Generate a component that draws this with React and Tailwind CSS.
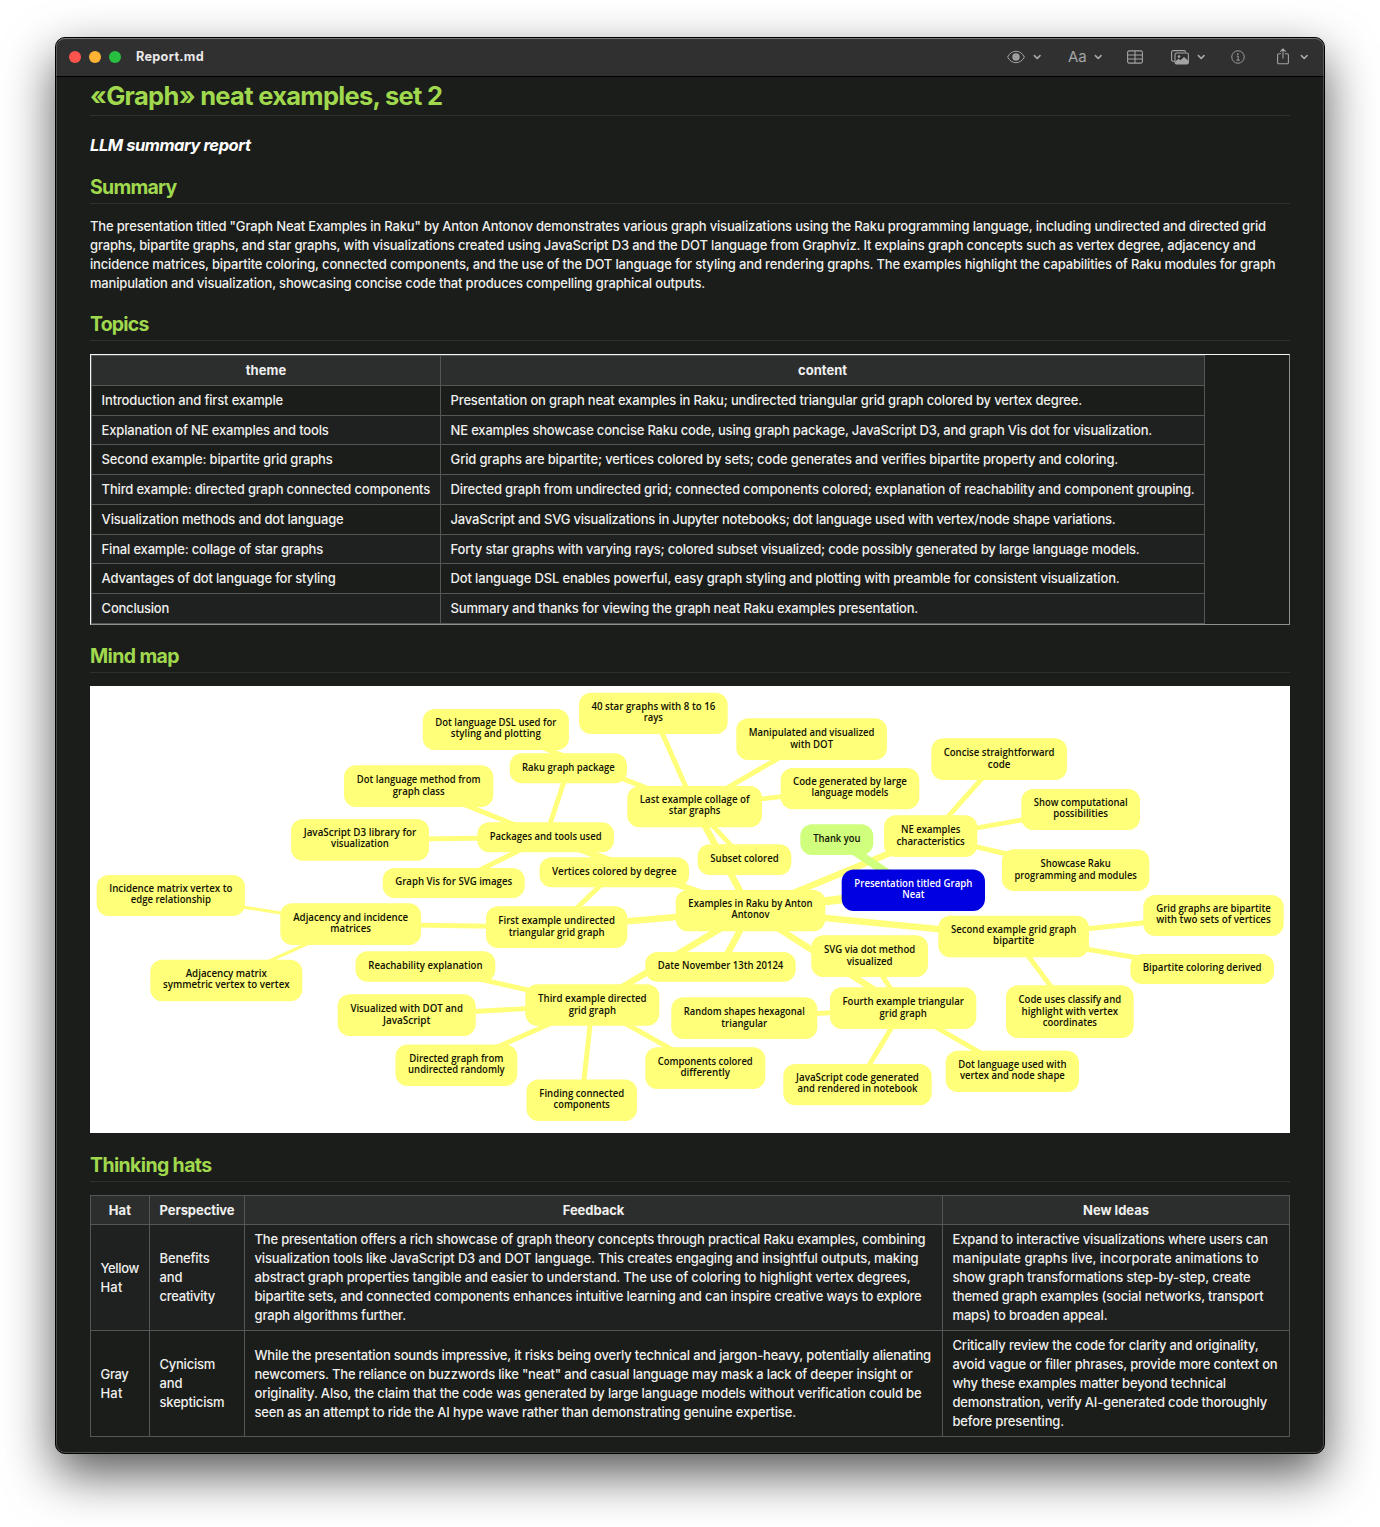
import { useLayoutEffect, useRef } from "react";

/* One line of text whose tracking is adjusted so that it fills `w` pixels. */
function Fit({ w, children }) {
  const ref = useRef(null);
  useLayoutEffect(() => {
    const el = ref.current;
    el.style.letterSpacing = "0px";
    const natural = el.getBoundingClientRect().width;
    el.style.letterSpacing = `${(w - natural) / children.length}px`;
  }, [w, children]);
  return (
    <span ref={ref} className="inline-block whitespace-nowrap">
      {children}
    </span>
  );
}

function Lines({ items }) {
  return items.map(([text, w]) => (
    <div key={text} className="h-[19px]">
      <Fit w={w}>{text}</Fit>
    </div>
  ));
}

/* ---------- toolbar ---------- */

function Chevron({ className }) {
  return (
    <svg className={className} width="8" height="6" viewBox="0 0 8 6" fill="none" stroke="#a9a9aa" strokeWidth="1.6" strokeLinecap="round" strokeLinejoin="round">
      <path d="M1.4 1.6 4.2 4.5 7 1.6" />
    </svg>
  );
}

function EyeIcon() {
  return (
    <svg width="18" height="14" viewBox="0 0 18 14" fill="none" stroke="#a3a3a4" strokeWidth="1">
      <path d="M.6 7C2.6 3.200 5.600 1.300 9 1.300S15.400 3.200 17.400 7C15.400 10.800 12.400 12.700 9 12.700S2.600 10.800.6 7Z" />
      <circle cx="9" cy="7" r="3.700" fill="#a3a3a4" stroke="none" />
      <circle cx="9" cy="7" r="1.300" fill="#dcdcdc" stroke="#4a4a4b" strokeWidth=".5" />
    </svg>
  );
}

function TableIcon() {
  return (
    <svg className="ml-[25px]" width="16" height="14" viewBox="0 0 16 14" fill="none" stroke="#a3a3a4" strokeWidth="1.1">
      <rect x=".6" y=".9" width="14.800" height="12.200" rx="1.500" />
      <path d="M8 1v12M.6 5h14.800M.6 9h14.800" />
    </svg>
  );
}

function ImagesIcon() {
  return (
    <svg className="ml-[28px]" width="18" height="15" viewBox="0 0 18 15" fill="none" stroke="#a3a3a4" strokeWidth="1.1">
      <path d="M3.700 11.300H2.200A1.600 1.600 0 0 1 .6 9.700V2.200A1.600 1.600 0 0 1 2.200.6H13a1.600 1.600 0 0 1 1.600 1.600" />
      <rect x="4" y="3" width="13.400" height="11" rx="1.600" />
      <circle cx="8" cy="6.600" r="1.300" fill="#a3a3a4" stroke="none" />
      <path d="M4.300 11.400 7.400 8.800l2 1.500 3.600-3.300 4.200 3.600v2.200a1.200 1.200 0 0 1-1.200 1.200H5.500a1.200 1.200 0 0 1-1.200-1.200Z" fill="#a3a3a4" stroke="none" />
    </svg>
  );
}

function InfoIcon() {
  return (
    <svg className="ml-[26px]" width="14" height="14" viewBox="0 0 15 15" fill="none" stroke="#a3a3a4" strokeWidth="1">
      <circle cx="7.500" cy="7.500" r="6.700" />
      <circle cx="7.300" cy="4.300" r=".95" fill="#a3a3a4" stroke="none" />
      <path d="M6 6.600h1.700v4.200M5.700 10.900h3.800" />
    </svg>
  );
}

function ShareIcon() {
  return (
    <svg className="ml-[32px] mb-px" width="12" height="17" viewBox="0 0 12 17" fill="none" stroke="#a3a3a4" strokeWidth="1.1" strokeLinecap="round" strokeLinejoin="round">
      <path d="M3.600 5.700H1.800A1.200 1.200 0 0 0 .6 6.900v7.700a1.200 1.200 0 0 0 1.200 1.200h8.400a1.200 1.200 0 0 0 1.200-1.200V6.900a1.200 1.200 0 0 0-1.200-1.200H8.400" />
      <path d="M6 10.300V1M3.600 3.300 6 .9l2.400 2.400" />
    </svg>
  );
}

function TitleBar() {
  return (
    <header className="flex h-[39px] items-center border-b border-black bg-[#303031] pl-[13px] pr-[16px]">
      <div className="flex gap-2">
        <span className="size-3 rounded-full bg-[#ff544d]" />
        <span className="size-3 rounded-full bg-[#feb334]" />
        <span className="size-3 rounded-full bg-[#27c040]" />
      </div>
      <div className="ml-[15px] text-[12.7px] leading-5 font-bold text-[#e9e9e9]">
        <Fit w={68}>Report.md</Fit>
      </div>
      <div className="ml-auto flex items-center">
        <EyeIcon />
        <Chevron className="ml-2" />
        <span className="ml-[27px] w-[18px] text-[15px] leading-5 text-[#a3a3a4]">
          <Fit w={18.500}>Aa</Fit>
        </span>
        <Chevron className="ml-2" />
        <TableIcon />
        <ImagesIcon />
        <Chevron className="ml-2" />
        <InfoIcon />
        <ShareIcon />
        <Chevron className="ml-[11px]" />
      </div>
    </header>
  );
}

/* ---------- headings ---------- */

function H2({ w, className, children }) {
  return (
    <h2 className={`${className} h-[29px] border-b border-[#2e302e] text-[19.5px] leading-6 font-bold text-[#a0d84e]`}>
      <Fit w={w}>{children}</Fit>
    </h2>
  );
}

/* ---------- tables ---------- */

const topics = [
  ["h-[30px]", "Introduction and first example", 181.5, "Presentation on graph neat examples in Raku; undirected triangular grid graph colored by vertex degree.", 631.5],
  ["h-[29px]", "Explanation of NE examples and tools", 227, "NE examples showcase concise Raku code, using graph package, JavaScript D3, and graph Vis dot for visualization.", 701.5],
  ["h-[30px]", "Second example: bipartite grid graphs", 231, "Grid graphs are bipartite; vertices colored by sets; code generates and verifies bipartite property and coloring.", 667.5],
  ["h-[30px]", "Third example: directed graph connected components", 328.5, "Directed graph from undirected grid; connected components colored; explanation of reachability and component grouping.", 744],
  ["h-[30px]", "Visualization methods and dot language", 242, "JavaScript and SVG visualizations in Jupyter notebooks; dot language used with vertex/node shape variations.", 665],
  ["h-[29px]", "Final example: collage of star graphs", 221.5, "Forty star graphs with varying rays; colored subset visualized; code possibly generated by large language models.", 689],
  ["h-[30px]", "Advantages of dot language for styling", 234, "Dot language DSL enables powerful, easy graph styling and plotting with preamble for consistent visualization.", 669],
  ["h-[30px]", "Conclusion", 67.5, "Summary and thanks for viewing the graph neat Raku examples presentation.", 467.500],
];

function TopicsTable() {
  return (
    <div className="mt-[13px] h-[271px] border border-t-[#f4f5f4] border-l-[#f4f5f4] border-r-[#8f918f] border-b-[#8f918f]">
      <table className="w-[1114px] table-fixed border-separate border-spacing-0 border-r border-b border-[#545755]">
        <colgroup>
          <col className="w-[349px]" />
          <col className="w-[764px]" />
        </colgroup>
        <thead>
          <tr className="h-[30px] bg-[#2c2e2e]">
            <th className="border-t border-l border-[#545755] p-0 font-bold"><Fit w={40.5}>theme</Fit></th>
            <th className="border-t border-l border-[#545755] p-0 font-bold"><Fit w={49}>content</Fit></th>
          </tr>
        </thead>
        <tbody>
          {topics.map(([h, theme, tw, content, cw]) => (
            <tr key={theme} className={`${h} even:bg-[#1f2121]`}>
              <td className="border-t border-l border-[#545755] py-0 pr-0 pl-[9.6px]"><Fit w={tw}>{theme}</Fit></td>
              <td className="border-t border-l border-[#545755] py-0 pr-0 pl-[9.6px]"><Fit w={cw}>{content}</Fit></td>
            </tr>
          ))}
        </tbody>
      </table>
    </div>
  );
}

const hats = [
  [
    [["Yellow", 38.500], ["Hat", 22]],
    [["Benefits", 50], ["and", 23], ["creativity", 55.5]],
    [
      ["The presentation offers a rich showcase of graph theory concepts through practical Raku examples, combining", 671],
      ["visualization tools like JavaScript D3 and DOT language. This creates engaging and insightful outputs, making", 664],
      ["abstract graph properties tangible and easier to understand. The use of coloring to highlight vertex degrees,", 656],
      ["bipartite sets, and connected components enhances intuitive learning and can inspire creative ways to explore", 667],
      ["graph algorithms further.", 151.5],
    ],
    [
      ["Expand to interactive visualizations where users can", 315.5],
      ["manipulate graphs live, incorporate animations to", 306],
      ["show graph transformations step-by-step, create", 298],
      ["themed graph examples (social networks, transport", 311],
      ["maps) to broaden appeal.", 155],
    ],
  ],
  [
    [["Gray", 28], ["Hat", 22]],
    [["Cynicism", 55.5], ["and", 23], ["skepticism", 65]],
    [
      ["While the presentation sounds impressive, it risks being overly technical and jargon-heavy, potentially alienating", 676.500],
      ["newcomers. The reliance on buzzwords like \"neat\" and casual language may mask a lack of deeper insight or", 658],
      ["originality. Also, the claim that the code was generated by large language models without verification could be", 667],
      ["seen as an attempt to ride the AI hype wave rather than demonstrating genuine expertise.", 541.500],
    ],
    [
      ["Critically review the code for clarity and originality,", 306],
      ["avoid vague or filler phrases, provide more context on", 325],
      ["why these examples matter beyond technical", 273.5],
      ["demonstration, verify AI-generated code thoroughly", 314.500],
      ["before presenting.", 111.5],
    ],
  ],
];

const hatHeads = [["Hat", 22.5], ["Perspective", 75], ["Feedback", 61.5], ["New Ideas", 66]];

function HatsTable() {
  return (
    <table className="mt-[13px] w-[1200px] table-fixed border-separate border-spacing-0 border-r border-b border-[#545755]">
      <colgroup>
        <col className="w-[59px]" />
        <col className="w-[95px]" />
        <col className="w-[698px]" />
        <col className="w-[347px]" />
      </colgroup>
      <thead>
        <tr className="h-[29px] bg-[#2c2e2e]">
          {hatHeads.map(([t, w]) => (
            <th key={t} className="border-t border-l border-[#545755] p-0 font-bold"><Fit w={w}>{t}</Fit></th>
          ))}
        </tr>
      </thead>
      <tbody>
        {hats.map((row, i) => (
          <tr key={i} className="h-[106px] odd:bg-[#1f2121]">
            {row.map((items, j) => (
              <td key={j} className="border-t border-l border-[#545755] py-0 pr-0 pl-[9.5px] align-middle"><Lines items={items} /></td>
            ))}
          </tr>
        ))}
      </tbody>
    </table>
  );
}

/* ---------- mind map ---------- */

/* id: [left, top, right, bottom, line pitch, [text, width]...] */
const nodes = {
  dsl: [422.7, 709, 569, 750, 11, ["Dot language DSL used for", 120.4], ["styling and plotting", 89.5]],
  method: [344, 765.3, 493.3, 807, 12, ["Dot language method from", 123], ["graph class", 51.3]],
  jsd3: [291, 819, 429, 860.7, 11, ["JavaScript D3 library for", 112], ["visualization", 57.3]],
  incidence: [96.7, 875, 245, 916, 11, ["Incidence matrix vertex to", 122.7], ["edge relationship", 79.7]],
  forty: [579, 692.7, 727.7, 734, 11, ["40 star graphs with 8 to 16", 123.3], ["rays", 18.7]],
  raku: [509.7, 753.3, 627, 783.3, 11, ["Raku graph package", 92]],
  manip: [736.3, 718.3, 887, 760, 12, ["Manipulated and visualized", 125], ["with DOT", 42.3]],
  last: [627.3, 786, 762, 827.3, 11, ["Last example collage of", 109.3], ["star graphs", 51]],
  codegen: [780.7, 768, 919.3, 809.3, 11, ["Code generated by large", 113.3], ["language models", 76.3]],
  packages: [477.3, 822.3, 614, 852.3, 11, ["Packages and tools used", 111.3]],
  vertices: [539.5, 857.3, 689, 887.3, 11, ["Vertices colored by degree", 124]],
  subset: [697.7, 844.3, 791.3, 875, 11, ["Subset colored", 67.7]],
  ne: [884, 815.3, 977.3, 857, 12, ["NE examples", 58.7], ["characteristics", 67.7]],
  concise: [931.3, 738.3, 1067, 780, 12, ["Concise straightforward", 110.3], ["code", 22]],
  show: [1021.3, 789, 1140, 830, 11, ["Show computational", 93.3], ["possibilities", 54]],
  showcase: [1002, 849.3, 1149.3, 891, 12, ["Showcase Raku", 69.7], ["programming and modules", 121.7]],
  grid: [1143.3, 895, 1283.7, 936, 11, ["Grid graphs are bipartite", 114], ["with two sets of vertices", 114]],
  second: [938.3, 915.7, 1089, 957.3, 11, ["Second example grid graph", 124.7], ["bipartite", 40.7]],
  bipartite: [1130.3, 954, 1274, 984, 11, ["Bipartite coloring derived", 118.3]],
  codeuses: [1006, 985.3, 1133.7, 1038, 11.5, ["Code uses classify and", 102], ["highlight with vertex", 96], ["coordinates", 53.7]],
  dotused: [945.7, 1050.7, 1079, 1092, 11, ["Dot language used with", 107.7], ["vertex and node shape", 104.3]],
  jscode: [783.3, 1064, 931.7, 1105.3, 11, ["JavaScript code generated", 122.3], ["and rendered in notebook", 119.3]],
  svgvia: [811.3, 935.3, 928, 977, 12, ["SVG via dot method", 90.7], ["visualized", 45.3]],
  fourth: [830, 987.3, 976.3, 1029, 12, ["Fourth example triangular", 120.7], ["grid graph", 46.7]],
  random: [671.3, 997.3, 817.3, 1039, 12, ["Random shapes hexagonal", 120.3], ["triangular", 45.3]],
  date: [645.3, 952, 795.7, 981.7, 11, ["Date November 13th 20124", 125]],
  examples: [675.7, 890, 825.3, 931.3, 11, ["Examples in Raku by Anton", 123.7], ["Antonov", 37.3]],
  first: [486, 906.3, 627.3, 948, 12, ["First example undirected", 116], ["triangular grid graph", 95.3]],
  third: [525.3, 984.3, 659.3, 1025.7, 12, ["Third example directed", 108], ["grid graph", 46.7]],
  components: [645.3, 1047.3, 765.3, 1089, 11, ["Components colored", 94.3], ["differently", 49]],
  finding: [526.5, 1079.5, 637, 1121, 11, ["Finding connected", 84.3], ["components", 55.7]],
  directed: [395.5, 1044.5, 517.3, 1086, 11, ["Directed graph from", 93.7], ["undirected randomly", 96]],
  visualized: [337.7, 994.3, 475.7, 1036, 12, ["Visualized with DOT and", 112], ["JavaScript", 47]],
  reach: [355.5, 951.3, 495.3, 981.7, 11, ["Reachability explanation", 113.7]],
  adjacency: [280.3, 903.3, 421, 945, 11, ["Adjacency and incidence", 114.3], ["matrices", 40]],
  adjmatrix: [150.3, 959.7, 302.3, 1001.3, 11, ["Adjacency matrix", 80.7], ["symmetric vertex to vertex", 126]],
  graphvis: [382.7, 868, 524.7, 898, 11, ["Graph Vis for SVG images", 116.4]],
  thanks: [800.3, 824.3, 873.3, 855, 11, ["Thank you", 46.7]],
  root: [841.7, 869.5, 985, 911, 11, ["Presentation titled Graph", 117.4], ["Neat", 21.7]],
};

const edges = [
  ["root", "examples", 8.3],
  ["examples", "ne", 6.5],
  ["examples", "last", 6.5],
  ["examples", "first", 6.5],
  ["examples", "second", 6.5],
  ["examples", "third", 6.5],
  ["examples", "fourth", 6.5],
  ["examples", "date", 6.5],
  ["examples", "packages", 6.5],
  ["ne", "concise", 4.9],
  ["ne", "show", 4.9],
  ["ne", "showcase", 4.9],
  ["last", "dsl", 4.9],
  ["last", "forty", 4.9],
  ["last", "manip", 4.9],
  ["last", "codegen", 4.9],
  ["last", "subset", 4.9],
  ["packages", "raku", 4.9],
  ["packages", "method", 4.9],
  ["packages", "jsd3", 4.9],
  ["packages", "graphvis", 4.9],
  ["first", "vertices", 4.9],
  ["first", "adjacency", 4.9],
  ["adjacency", "incidence", 3.2],
  ["adjacency", "adjmatrix", 3.2],
  ["second", "grid", 4.9],
  ["second", "bipartite", 4.9],
  ["second", "codeuses", 4.9],
  ["third", "reach", 4.9],
  ["third", "visualized", 4.9],
  ["third", "directed", 4.9],
  ["third", "finding", 4.9],
  ["third", "components", 4.9],
  ["fourth", "svgvia", 4.9],
  ["fourth", "random", 4.9],
  ["fourth", "jscode", 4.9],
  ["fourth", "dotused", 4.9],
  ["root", "thanks", 8.3],
];

const center = ([l, t, r, b]) => [(l + r) / 2, (t + b) / 2];

function MindMap() {
  return (
    <svg className="mt-[13px] block bg-white" width="1200" height="447" viewBox="90 686 1200 447">
      {edges.map(([a, b, w]) => {
        const [x1, y1] = center(nodes[a]);
        const [x2, y2] = center(nodes[b]);
        return <line key={a + b} x1={x1} y1={y1} x2={x2} y2={y2} strokeWidth={w} stroke={b === "thanks" ? "#cfff7c" : "#ffff7a"} />;
      })}
      {Object.entries(nodes).map(([id, [l, t, r, b, pitch, ...lines]]) => (
        <g key={id}>
          <rect x={l} y={t} width={r - l} height={b - t} rx="12" fill={id === "root" ? "#0000e0" : id === "thanks" ? "#cfff7c" : "#ffff7a"} />
          {lines.map(([text, w], i) => (
            <text
              key={text}
              x={(l + r) / 2 - w / 2 - 0.3}
              y={Math.round(t + 17.2) + i * pitch}
              textLength={w + 0.6}
              lengthAdjust="spacingAndGlyphs"
              fill={id === "root" ? "#ffffff" : "#111100"}
              className="font-['Open_Sans',sans-serif] text-[10.1px] font-semibold"
            >
              {text}
            </text>
          ))}
        </g>
      ))}
    </svg>
  );
}

export default function App() {
  return (
    <div className="h-[1527px] w-[1380px] overflow-hidden bg-white pt-[37px] pl-[55px] font-['Inter',sans-serif]">
      <div className="relative h-[1417px] w-[1270px] overflow-visible rounded-[10px] border border-black bg-[#1b1d1a] shadow-[0_20px_50px_rgba(0,0,0,0.66)]">
        <div className="overflow-hidden rounded-[9px]">
          <TitleBar />
          <main className="w-[1234px] pl-[34px] text-[13px] leading-[19px] font-medium text-[#f0f0ee]">
            <h1 className="h-[39px] border-b border-[#2e302e] pt-[3px] text-[25.5px] leading-8 font-bold text-[#a0d84e]">
              <Fit w={352.5}>«Graph» neat examples, set 2</Fit>
            </h1>
            <h3 className="mt-[19px] text-[16.5px] leading-5 font-bold text-white italic">
              <Fit w={160.5}>LLM summary report</Fit>
            </h3>
            <H2 className="mt-[20px]" w={86.5}>Summary</H2>
            <div className="mt-[13px]">
              <Lines
                items={[
                  ["The presentation titled \"Graph Neat Examples in Raku\" by Anton Antonov demonstrates various graph visualizations using the Raku programming language, including undirected and directed grid", 1176],
                  ["graphs, bipartite graphs, and star graphs, with visualizations created using JavaScript D3 and the DOT language from Graphviz. It explains graph concepts such as vertex degree, adjacency and", 1165.5],
                  ["incidence matrices, bipartite coloring, connected components, and the use of the DOT language for styling and rendering graphs. The examples highlight the capabilities of Raku modules for graph", 1185.5],
                  ["manipulation and visualization, showcasing concise code that produces compelling graphical outputs.", 615],
                ]}
              />
            </div>
            <H2 className="mt-[19px]" w={58.5}>Topics</H2>
            <TopicsTable />
            <H2 className="mt-[19px]" w={89}>Mind map</H2>
            <MindMap />
            <H2 className="mt-[20px]" w={121.5}>Thinking hats</H2>
            <HatsTable />
          </main>
        </div>
        <div className="pointer-events-none absolute inset-0 rounded-[9px] border border-white/20 border-t-white/35" />
      </div>
    </div>
  );
}
